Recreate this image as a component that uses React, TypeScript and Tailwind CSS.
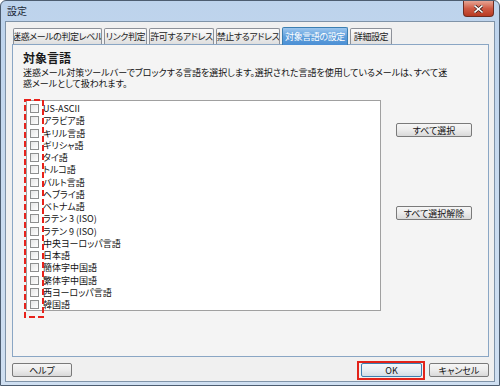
import React from "react";

const FONT = "font-['Noto_Sans_CJK_JP','Noto_Sans',sans-serif] [font-feature-settings:'palt']";

const tabs = [
  { label: "迷惑メールの判定レベル", w: "w-[89px]" },
  { label: "リンク判定", w: "w-[43px]" },
  { label: "許可するアドレス", w: "w-[65px]" },
  { label: "禁止するアドレス", w: "w-[64px]" },
  { label: "対象言語の設定", w: "w-[66px]", active: true },
  { label: "詳細設定", w: "w-[42px]" },
];

const langs = [
  "US-ASCII",
  "アラビア語",
  "キリル言語",
  "ギリシャ語",
  "タイ語",
  "トルコ語",
  "バルト言語",
  "ヘブライ語",
  "ベトナム語",
  "ラテン 3 (ISO)",
  "ラテン 9 (ISO)",
  "中央ヨーロッパ言語",
  "日本語",
  "簡体字中国語",
  "繁体字中国語",
  "西ヨーロッパ言語",
  "韓国語",
];

function Btn({ children, w, def }: { children: React.ReactNode; w: string; def?: boolean }) {
  return (
    <div
      className={`${w} h-[14px] flex items-center justify-center whitespace-nowrap rounded-[2px] border text-[9px] leading-none text-[#111] bg-gradient-to-b ${
        def
          ? "border-[#3c7fb1] from-[#f4f8fb] via-[#e8eef3] to-[#d3dde6]"
          : "border-[#7a7a7a] from-[#f6f6f6] via-[#ececec] to-[#d9d9d9]"
      }`}
    >
      {children}
    </div>
  );
}

export default function App() {
  return (
    <div className={`w-[500px] h-[388px] bg-white ${FONT}`}>
      <div className="relative w-[500px] h-[386px] border border-[#4d5d70] rounded-t-[6px] bg-gradient-to-b from-[#bdd3ec] via-[#c9dbef] to-[#cfdff1] flex flex-col px-[4px] pb-[3px]">
        {/* title bar */}
        <div className="h-[20px] flex items-center pl-[2px] text-[10px] text-[#1b2838] leading-none">
          設定
        </div>
        {/* close button */}
        <div className="absolute top-0 right-[5px] w-[31px] h-[16px] rounded-b-[4px] border border-t-0 border-[#6d2c22] bg-gradient-to-b from-[#e6a493] via-[#cf5a44] to-[#b73a22] flex items-center justify-center">
          <svg width="9" height="8" viewBox="0 0 9 8">
            <path d="M1 1 L8 7 M8 1 L1 7" stroke="#3a1a14" strokeWidth="3" strokeLinecap="square" />
            <path d="M1 1 L8 7 M8 1 L1 7" stroke="#ffffff" strokeWidth="1.6" strokeLinecap="square" />
          </svg>
        </div>

        {/* client area */}
        <div className="flex-1 border border-[#7f93a8] bg-[#f0f0f0] flex flex-col pl-[6px] pr-[5px] pt-[5px]">
          {/* tabs */}
          <div className="h-[17px] flex items-end gap-[2px] pl-[1px] relative z-10">
            {tabs.map((t) =>
              t.active ? (
                <div
                  key={t.label}
                  className={`${t.w} h-[18px] -mb-px flex items-center justify-center whitespace-nowrap overflow-hidden rounded-t-[2px] border border-b-0 border-[#3c7fb1] bg-gradient-to-b from-[#9cc6ee] via-[#5f9fdc] to-[#4b8fd4] text-[9px] tracking-[-0.4px] leading-none text-white`}
                >
                  {t.label}
                </div>
              ) : (
                <div
                  key={t.label}
                  className={`${t.w} h-[16px] flex items-center justify-center whitespace-nowrap overflow-hidden rounded-t-[2px] border border-b-0 border-[#8d9199] bg-gradient-to-b from-[#fbfbfb] via-[#eeeeee] to-[#dedede] text-[9px] tracking-[-0.4px] leading-none text-[#222]`}
                >
                  {t.label}
                </div>
              )
            )}
          </div>

          {/* panel */}
          <div className="h-[313px] border border-[#8aa6c4] bg-[#f4f4f4] flex flex-col pl-[10px] pt-[6px]">
            <div className="text-[12px] leading-[14px] font-bold text-[#1a1a1a]">対象言語</div>
            <div className="mt-[1.5px] flex flex-col text-[9px] leading-[11px] text-[#111] whitespace-nowrap">
              <span>迷惑メール対策ツールバーでブロックする言語を選択します。選択された言語を使用しているメールは、すべて迷</span>
              <span>惑メールとして扱われます。</span>
            </div>

            <div className="mt-[11.5px] flex">
              <div className="relative ml-[3px] w-[355px] h-[211px] border border-[#a0a0a0] bg-white pt-[1.5px]">
                {langs.map((l) => (
                  <div key={l} className="h-[12.25px] flex items-center">
                    <div className="ml-[3px] w-[9px] h-[9px] border border-[#8e8f8f] bg-gradient-to-br from-[#e6e6e6] to-[#ffffff]" />
                    <span className="ml-[4px] text-[9px] leading-none text-[#111]">{l}</span>
                  </div>
                ))}
                <svg
                  className="absolute left-[-3px] top-[-2px]"
                  width="21"
                  height="220"
                  viewBox="0 0 21 220"
                >
                  <rect
                    x="1"
                    y="1"
                    width="18"
                    height="217"
                    fill="none"
                    stroke="#e8221b"
                    strokeWidth="2"
                    strokeDasharray="6 3"
                  />
                </svg>
              </div>

              <div className="ml-[15px] flex flex-col pt-[23px]">
                <Btn w="w-[76px]">すべて選択</Btn>
                <div className="h-[69px]" />
                <Btn w="w-[76px]">すべて選択解除</Btn>
              </div>
            </div>
          </div>

          {/* footer */}
          <div className="mt-[6px] flex items-start">
            <Btn w="w-[60px]">ヘルプ</Btn>
            <div className="ml-auto flex gap-[7px]">
              <div className="relative">
                <Btn w="w-[61px]" def>
                  OK
                </Btn>
                <div className="absolute left-[-4px] top-[-2px] w-[68px] h-[19px] border-2 border-[#e2231a]" />
              </div>
              <Btn w="w-[60px]">キャンセル</Btn>
            </div>
          </div>
        </div>
      </div>
    </div>
  );
}
